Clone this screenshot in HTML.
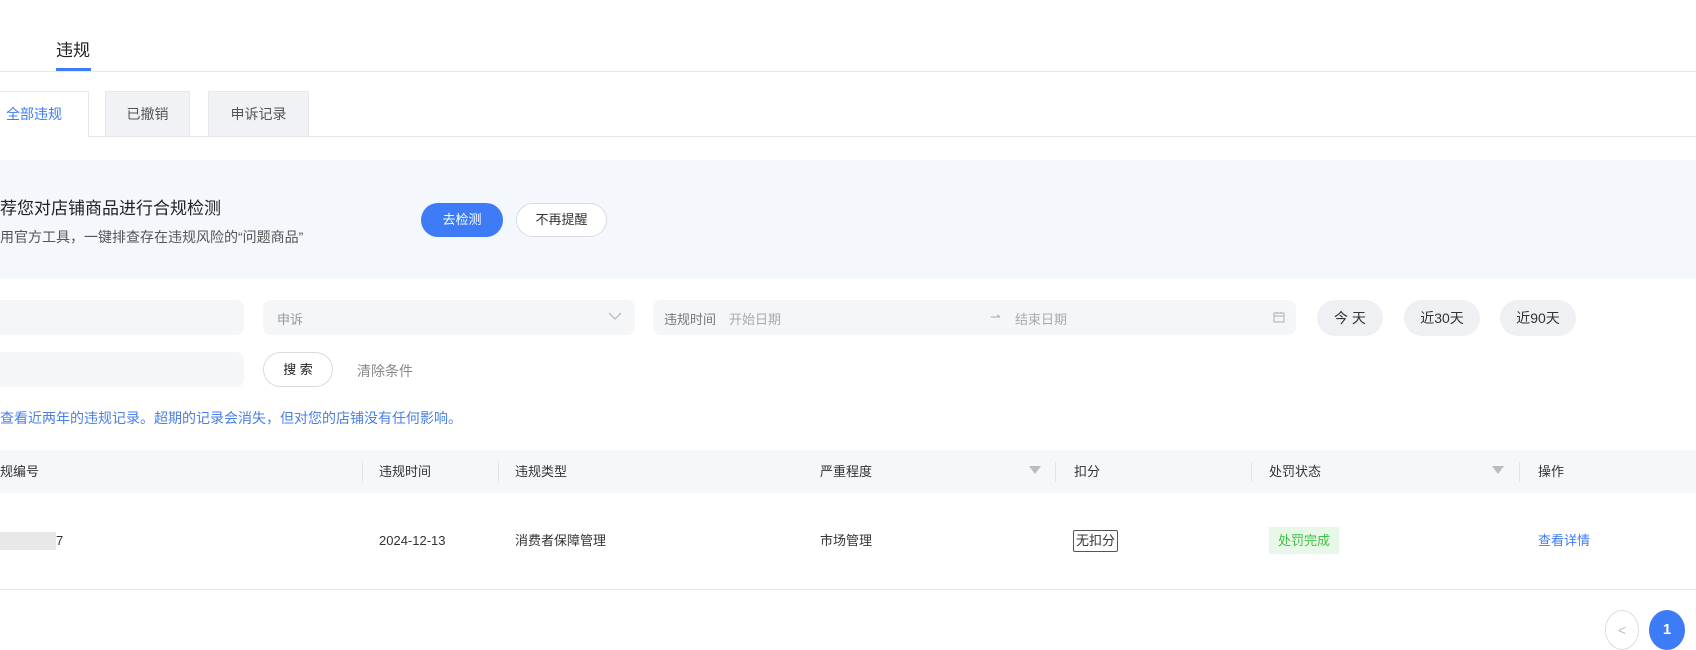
<!DOCTYPE html>
<html><head><meta charset="utf-8"><style>
*{box-sizing:border-box;margin:0;padding:0}
body{width:1696px;height:636px;overflow:hidden;background:#fff;font-family:"Liberation Sans","Noto Sans CJK SC",sans-serif;color:#333;font-size:14px;position:relative}
.a{position:absolute;white-space:nowrap}
.inp{position:absolute;background:#f5f6f8;border-radius:8px}
.pill{position:absolute;background:#eef0f3;border-radius:18px;text-align:center;line-height:36px;font-size:14px;color:#333}
.th{position:absolute;top:450px;height:43px;line-height:43px;font-size:13px;color:#333}
.sep{position:absolute;top:462px;width:1px;height:20px;background:#e3e5e8}
.fi{position:absolute;top:466px;width:0;height:0;border-left:6px solid transparent;border-right:6px solid transparent;border-top:8px solid #bbb}
.td{position:absolute;top:530px;height:22px;line-height:22px;font-size:13px;color:#333}
</style></head><body>
<div class="a" style="left:56px;top:36px;font-size:17px;color:#222">违规</div>
<div class="a" style="left:56px;top:68px;width:35px;height:3px;background:#3d7bf7"></div>
<div class="a" style="left:0;top:71px;width:1696px;height:1px;background:#e6e8eb"></div>

<div class="a" style="left:0;top:136px;width:1696px;height:1px;background:#e6e8eb"></div>
<div class="a" style="left:0;top:91px;width:89px;height:46px;background:#fff;border:1px solid #e6e8eb;border-bottom:none;border-left:none;color:#3d7bf7;font-size:14px;line-height:44px;padding-left:6px">全部违规</div>
<div class="a" style="left:105px;top:91px;width:85px;height:45px;background:#f0f2f5;border:1px solid #e6e8eb;border-bottom:none;text-align:center;line-height:44px;color:#555">已撤销</div>
<div class="a" style="left:208px;top:91px;width:101px;height:45px;background:#f0f2f5;border:1px solid #e6e8eb;border-bottom:none;text-align:center;line-height:44px;color:#555">申诉记录</div>

<div class="a" style="left:0;top:160px;width:1696px;height:119px;background:#f4f7fc"></div>
<div class="a" style="left:0;top:194px;font-size:17px;color:#222">荐您对店铺商品进行合规检测</div>
<div class="a" style="left:0;top:227px;font-size:14px;color:#555">用官方工具，一键排查存在违规风险的“问题商品”</div>
<div class="a" style="left:421px;top:203px;width:82px;height:34px;border-radius:17px;background:#3d7bf7;color:#fff;text-align:center;line-height:34px;font-size:13px">去检测</div>
<div class="a" style="left:516px;top:203px;width:91px;height:34px;border-radius:17px;background:#fff;border:1px solid #d8dbe0;color:#333;text-align:center;line-height:32px;font-size:13px">不再提醒</div>

<div class="inp" style="left:0;top:300px;width:244px;height:35px;border-radius:0 8px 8px 0"></div>
<div class="inp" style="left:263px;top:300px;width:372px;height:35px"></div>
<div class="a" style="left:277px;top:309px;font-size:13px;color:#999">申诉</div>
<svg class="a" style="left:608px;top:311px" width="14" height="10" viewBox="0 0 14 10"><path d="M1 2l6 6 6-6" fill="none" stroke="#bbb" stroke-width="1.3"/></svg>
<div class="inp" style="left:653px;top:300px;width:643px;height:35px"></div>
<div class="a" style="left:664px;top:309px;font-size:13px;color:#777">违规时间</div>
<div class="a" style="left:729px;top:309px;font-size:13px;color:#aaa">开始日期</div>
<div class="a" style="left:990px;top:309px;font-size:13px;color:#aaa">⇀</div>
<div class="a" style="left:1015px;top:309px;font-size:13px;color:#aaa">结束日期</div>
<svg class="a" style="left:1273px;top:311px" width="12" height="12" viewBox="0 0 12 12"><rect x="1" y="2" width="10" height="9" fill="none" stroke="#bbb" stroke-width="1.2"/><path d="M1 5h10M4 1v2M8 1v2" stroke="#bbb" stroke-width="1.2"/></svg>
<div class="pill" style="left:1317px;top:300px;width:66px">今 天</div>
<div class="pill" style="left:1404px;top:300px;width:76px">近30天</div>
<div class="pill" style="left:1500px;top:300px;width:76px">近90天</div>

<div class="inp" style="left:0;top:352px;width:244px;height:35px;border-radius:0 8px 8px 0"></div>
<div class="a" style="left:263px;top:352px;width:70px;height:35px;border-radius:18px;border:1px solid #d8dbe0;text-align:center;line-height:33px;font-size:13px;color:#222">搜 索</div>
<div class="a" style="left:357px;top:361px;font-size:14px;color:#888">清除条件</div>

<div class="a" style="left:0;top:408px;font-size:14px;color:#4a7fe8">查看近两年的违规记录。超期的记录会消失，但对您的店铺没有任何影响。</div>

<div class="a" style="left:0;top:450px;width:1696px;height:43px;background:#f6f7f9"></div>
<div class="th" style="left:0">规编号</div>
<div class="sep" style="left:362px"></div>
<div class="th" style="left:379px">违规时间</div>
<div class="sep" style="left:498px"></div>
<div class="th" style="left:515px">违规类型</div>
<div class="th" style="left:820px">严重程度</div>
<div class="fi" style="left:1029px"></div>
<div class="sep" style="left:1055px"></div>
<div class="th" style="left:1074px">扣分</div>
<div class="sep" style="left:1251px"></div>
<div class="th" style="left:1269px">处罚状态</div>
<div class="fi" style="left:1492px"></div>
<div class="sep" style="left:1519px"></div>
<div class="th" style="left:1538px">操作</div>

<div class="a" style="left:0;top:532px;width:56px;height:18px;background:#e8e8e8"></div>
<div class="td" style="left:56px">7</div>
<div class="td" style="left:379px">2024-12-13</div>
<div class="td" style="left:515px">消费者保障管理</div>
<div class="td" style="left:820px">市场管理</div>
<div class="a" style="left:1073px;top:530px;height:22px;border:1px solid #555;border-radius:2px;padding:0 2px;line-height:20px;font-size:13px;color:#333">无扣分</div>
<div class="a" style="left:1269px;top:527px;width:70px;height:27px;background:#e8f8e8;color:#3fbf3f;text-align:center;line-height:27px;font-size:13px">处罚完成</div>
<div class="td" style="left:1538px;color:#3d7bf7">查看详情</div>
<div class="a" style="left:0;top:589px;width:1696px;height:1px;background:#e6e8eb"></div>

<div class="a" style="left:1605px;top:610px;width:34px;height:40px;border-radius:50%;border:1px solid #ddd;text-align:center;line-height:38px;color:#bbb;font-size:14px">&lt;</div>
<div class="a" style="left:1649px;top:610px;width:36px;height:40px;border-radius:50%;background:#3d7bf7;color:#fff;text-align:center;line-height:40px;font-size:15px;font-weight:bold">1</div>
</body></html>
